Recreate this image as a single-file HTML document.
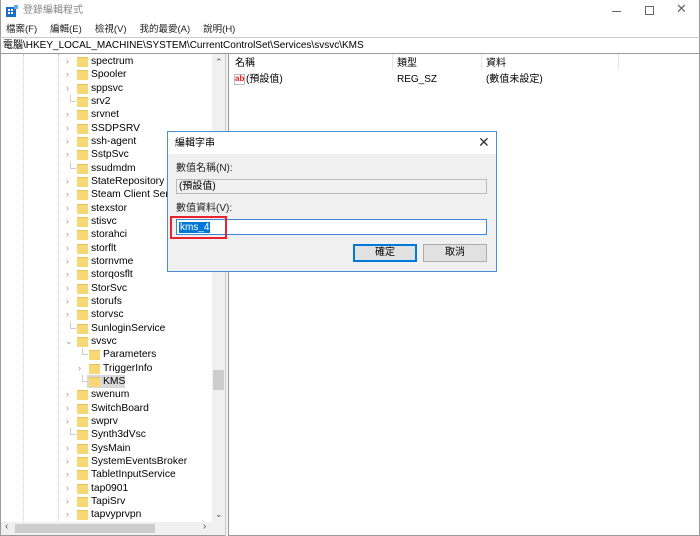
<!DOCTYPE html>
<html><head><meta charset="utf-8"><style>
*{margin:0;padding:0;box-sizing:border-box}
body{width:700px;height:536px;overflow:hidden;background:#fff;font-family:"Liberation Sans","Noto Sans CJK TC",sans-serif;font-size:10px;line-height:12px;color:#000;position:relative}
.a{position:absolute}
.menu span{margin-right:13px;color:#222}
.tree{position:absolute;left:0;top:55px;width:212px;height:467px;overflow:hidden;font-size:10.3px}
.r{height:13.333px;line-height:13.333px;position:relative;white-space:nowrap}
.r .ar{position:absolute;left:66px;top:0;color:#999;font-size:9px}
.r .f{position:absolute;left:77px;top:2px;width:11px;height:10px;background:#f8d775;border-top:1px solid #e8c060}
.r .t{position:absolute;left:91px;top:0}
.r .ln{position:absolute;left:70px;top:0;width:6px;height:7px;border-left:1px solid #ccc;border-bottom:1px solid #ccc}
.c .f{left:89px}.c .t{left:103px}.c .ar{left:78px}.c .ln{left:82px}
.btn{position:absolute;height:18px;border:1px solid #adadad;background:#e1e1e1;text-align:center;line-height:16px}
</style></head><body>
<div class="a" style="left:0;top:0;width:700px;height:536px;border:1px solid #9a9a9a;border-top:none"></div>
<div class="a" style="left:6px;top:5px;width:12px;height:12px">
<div class="a" style="left:0;top:2px;width:10px;height:10px;background:#1a6fc9"></div>
<div class="a" style="left:2px;top:4px;width:2px;height:2px;background:#fff"></div>
<div class="a" style="left:5px;top:4px;width:2px;height:2px;background:#fff"></div>
<div class="a" style="left:2px;top:7px;width:2px;height:2px;background:#fff"></div>
<div class="a" style="left:5px;top:7px;width:2px;height:2px;background:#fff"></div>
<div class="a" style="left:8px;top:0;width:4px;height:4px;background:#5ab0f0"></div>
</div>
<div class="a" style="left:23px;top:5px;color:#888;font-size:10px">登錄編輯程式</div>
<div class="a" style="left:612px;top:11px;width:9px;height:1px;background:#666"></div>
<div class="a" style="left:645px;top:6px;width:9px;height:9px;border:1px solid #666"></div>
<div class="a" style="left:676px;top:3px;color:#666;font-size:13px">✕</div>
<div class="a menu" style="left:6px;top:24px;font-size:9.5px"><span>檔案(F)</span><span>編輯(E)</span><span>檢視(V)</span><span>我的最愛(A)</span><span>說明(H)</span></div>
<div class="a" style="left:0;top:37px;width:700px;height:17px;border-top:1px solid #ccc;border-bottom:1px solid #999;line-height:15px;padding-left:3px;font-size:10px">電腦\HKEY_LOCAL_MACHINE\SYSTEM\CurrentControlSet\Services\svsvc\KMS</div>
<div class="a" style="left:23px;top:54px;height:468px;border-left:1px dotted #ccc"></div>
<div class="a" style="left:58px;top:54px;height:468px;border-left:1px dotted #ccc"></div>
<div class="tree">
<div class="r"><span class="ar">›</span><span class="f"></span><span class="t">spectrum</span></div>
<div class="r"><span class="ar">›</span><span class="f"></span><span class="t">Spooler</span></div>
<div class="r"><span class="ar">›</span><span class="f"></span><span class="t">sppsvc</span></div>
<div class="r"><span class="ln"></span><span class="f"></span><span class="t">srv2</span></div>
<div class="r"><span class="ar">›</span><span class="f"></span><span class="t">srvnet</span></div>
<div class="r"><span class="ar">›</span><span class="f"></span><span class="t">SSDPSRV</span></div>
<div class="r"><span class="ar">›</span><span class="f"></span><span class="t">ssh-agent</span></div>
<div class="r"><span class="ar">›</span><span class="f"></span><span class="t">SstpSvc</span></div>
<div class="r"><span class="ln"></span><span class="f"></span><span class="t">ssudmdm</span></div>
<div class="r"><span class="ar">›</span><span class="f"></span><span class="t">StateRepository</span></div>
<div class="r"><span class="ar">›</span><span class="f"></span><span class="t">Steam Client Service</span></div>
<div class="r"><span class="ar">›</span><span class="f"></span><span class="t">stexstor</span></div>
<div class="r"><span class="ar">›</span><span class="f"></span><span class="t">stisvc</span></div>
<div class="r"><span class="ar">›</span><span class="f"></span><span class="t">storahci</span></div>
<div class="r"><span class="ar">›</span><span class="f"></span><span class="t">storflt</span></div>
<div class="r"><span class="ar">›</span><span class="f"></span><span class="t">stornvme</span></div>
<div class="r"><span class="ar">›</span><span class="f"></span><span class="t">storqosflt</span></div>
<div class="r"><span class="ar">›</span><span class="f"></span><span class="t">StorSvc</span></div>
<div class="r"><span class="ar">›</span><span class="f"></span><span class="t">storufs</span></div>
<div class="r"><span class="ar">›</span><span class="f"></span><span class="t">storvsc</span></div>
<div class="r"><span class="ln"></span><span class="f"></span><span class="t">SunloginService</span></div>
<div class="r"><span class="ar" style="left:65px">⌄</span><span class="f"></span><span class="t">svsvc</span></div>
<div class="r c"><span class="ln"></span><span class="f"></span><span class="t">Parameters</span></div>
<div class="r c"><span class="ar">›</span><span class="f"></span><span class="t">TriggerInfo</span></div>
<div class="r c"><span class="ln"></span><span class="a" style="left:87px;top:0;width:38px;height:13px;background:#d9d9d9"></span><span class="f"></span><span class="t">KMS</span></div>
<div class="r"><span class="ar">›</span><span class="f"></span><span class="t">swenum</span></div>
<div class="r"><span class="ar">›</span><span class="f"></span><span class="t">SwitchBoard</span></div>
<div class="r"><span class="ar">›</span><span class="f"></span><span class="t">swprv</span></div>
<div class="r"><span class="ln"></span><span class="f"></span><span class="t">Synth3dVsc</span></div>
<div class="r"><span class="ar">›</span><span class="f"></span><span class="t">SysMain</span></div>
<div class="r"><span class="ar">›</span><span class="f"></span><span class="t">SystemEventsBroker</span></div>
<div class="r"><span class="ar">›</span><span class="f"></span><span class="t">TabletInputService</span></div>
<div class="r"><span class="ar">›</span><span class="f"></span><span class="t">tap0901</span></div>
<div class="r"><span class="ar">›</span><span class="f"></span><span class="t">TapiSrv</span></div>
<div class="r"><span class="ar">›</span><span class="f"></span><span class="t">tapvyprvpn</span></div>
</div>
<div class="a" style="left:212px;top:54px;width:13px;height:468px;background:#f0f0f0"></div>
<div class="a" style="left:215px;top:56px;color:#555;font-size:9px">⌃</div>
<div class="a" style="left:215px;top:508px;color:#555;font-size:9px">⌄</div>
<div class="a" style="left:213px;top:370px;width:11px;height:20px;background:#cdcdcd"></div>
<div class="a" style="left:1px;top:522px;width:224px;height:13px;background:#f0f0f0"></div>
<div class="a" style="left:15px;top:524px;width:140px;height:9px;background:#cdcdcd"></div>
<div class="a" style="left:5px;top:521px;color:#555;font-size:10px">‹</div>
<div class="a" style="left:203px;top:521px;color:#555;font-size:10px">›</div>
<div class="a" style="left:225px;top:54px;width:4px;height:482px;background:#f0f0f0;border-left:1px solid #ccc;border-right:1px solid #999"></div>
<div class="a" style="left:235px;top:58px">名稱</div>
<div class="a" style="left:392px;top:54px;height:16px;border-left:1px solid #e5e5e5"></div>
<div class="a" style="left:397px;top:58px">類型</div>
<div class="a" style="left:481px;top:54px;height:16px;border-left:1px solid #e5e5e5"></div>
<div class="a" style="left:486px;top:58px">資料</div>
<div class="a" style="left:618px;top:54px;height:16px;border-left:1px solid #e5e5e5"></div>
<div class="a" style="left:234px;top:74px;width:11px;height:11px;border:1px solid #bbb;background:#fff;color:#d22;font-size:8px;line-height:8px;font-weight:bold;text-align:center">ab</div>
<div class="a" style="left:246px;top:74px">(預設值)</div>
<div class="a" style="left:397px;top:74px">REG_SZ</div>
<div class="a" style="left:486px;top:74px">(數值未設定)</div>
<div class="a" style="left:167px;top:131px;width:330px;height:141px;border:1px solid #4a90d9;background:#f0f0f0">
<div class="a" style="left:0;top:0;width:328px;height:22px;background:#fff"></div>
<div class="a" style="left:7px;top:6px">編輯字串</div>
<div class="a" style="left:310px;top:2px;font-size:14px;line-height:16px;color:#333">✕</div>
<div class="a" style="left:8px;top:31px;color:#222">數值名稱(N):</div>
<div class="a" style="left:8px;top:47px;width:311px;height:15px;border:1px solid #bbb;background:#f0f0f0;padding-left:2px;line-height:13px">(預設值)</div>
<div class="a" style="left:8px;top:71px;color:#222">數值資料(V):</div>
<div class="a" style="left:8px;top:87px;width:311px;height:16px;border:1px solid #3c86d6;background:#fff"></div>
<div class="a" style="left:11px;top:90px;background:#0078d7;color:#fff;line-height:11px;padding:0 1px">kms_4</div>
<div class="a" style="left:2px;top:84px;width:57px;height:23px;border:2px solid #e8232d"></div>
<div class="btn" style="left:185px;top:112px;width:64px;border:1px solid #0078d7;box-shadow:inset 0 0 0 1px #0078d7">確定</div>
<div class="btn" style="left:255px;top:112px;width:64px">取消</div>
</div>
</body></html>
